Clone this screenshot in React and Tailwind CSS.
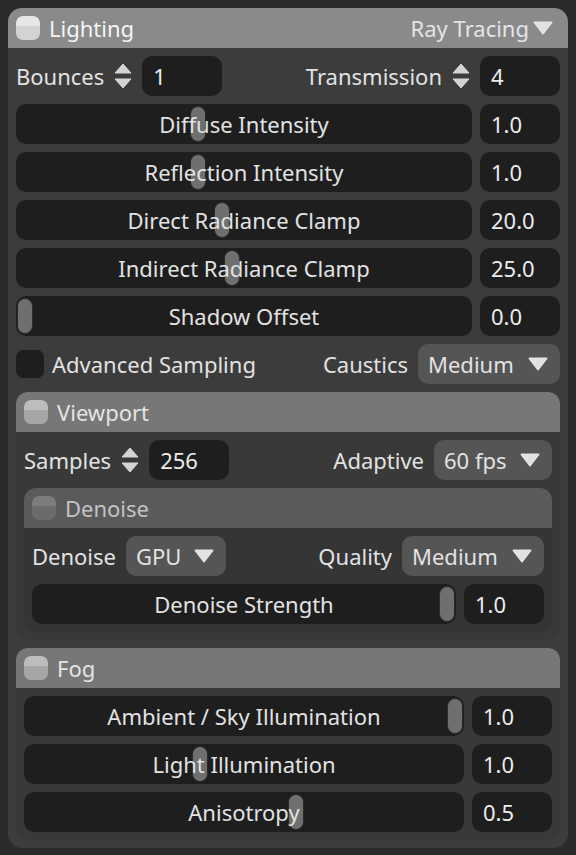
import React from 'react';

const tones = {
  lighting: {
    head: 'bg-[#8a8a8a] h-10',
    body: 'bg-[#3c3c3c]',
    top: 'bg-[#e6e6e6]',
    bottom: 'bg-[#d3d3d3]',
    title: 'text-[#f4f4f4]',
  },
  viewport: {
    head: 'bg-[#777777] h-10',
    body: 'bg-[#393939]',
    top: 'bg-[#bdbdbd]',
    bottom: 'bg-[#a6a6a6]',
    title: 'text-[#e4e4e4]',
  },
  denoise: {
    head: 'bg-[#5a5a5a] h-10',
    body: 'bg-[#353535]',
    top: 'bg-[#7c7c7c]',
    bottom: 'bg-[#6b6b6b]',
    title: 'text-[#c4c4c4]',
  },
};

function HeaderIcon({ tone }) {
  return (
    <div className="w-6 h-6 rounded-[7px] overflow-hidden flex flex-col shrink-0">
      <div className={`h-[10px] ${tone.top}`} />
      <div className={`flex-1 ${tone.bottom}`} />
    </div>
  );
}

function Triangle() {
  return (
    <svg width="20" height="14" viewBox="0 0 20 14" className="shrink-0">
      <path d="M1.5 1.5 H18.5 L10 12.5 Z" fill="#e2e2e2" stroke="#e2e2e2" strokeWidth="2" strokeLinejoin="round" />
    </svg>
  );
}

function Spinner() {
  return (
    <svg width="18" height="26" viewBox="0 0 18 26" className="shrink-0">
      <path d="M1 10 L9 1 L17 10 Z" fill="#d4d4d4" stroke="#d4d4d4" strokeWidth="1" strokeLinejoin="round" />
      <path d="M1 16 L17 16 L9 25 Z" fill="#d4d4d4" stroke="#d4d4d4" strokeWidth="1" strokeLinejoin="round" />
    </svg>
  );
}

function NumberBox({ value }) {
  return (
    <div className="w-20 h-10 rounded-[10px] bg-[#1e1e1e] flex items-center px-[11px] text-[#ececec]">
      {value}
    </div>
  );
}

function NumberField({ label, value }) {
  return (
    <div className="flex items-center gap-[10px]">
      <span>{label}</span>
      <Spinner />
      <NumberBox value={value} />
    </div>
  );
}

function Dropdown({ label, value, width }) {
  return (
    <div className="flex items-center gap-[10px]">
      <span>{label}</span>
      <div className={`${width} h-10 rounded-[10px] bg-[#555555] flex items-center justify-between pl-[10px] pr-3`}>
        <span>{value}</span>
        <Triangle />
      </div>
    </div>
  );
}

function Slider({ label, value, pos }) {
  return (
    <div className="flex gap-2 h-10">
      <div className="relative flex-1 rounded-[10px] bg-[#1e1e1e] flex items-center justify-center">
        <div
          className="absolute top-[2px] bottom-[2px] w-4 rounded-full bg-[#6f6f6f] border border-[#2a2a2a]"
          style={{ left: `calc(${pos} * (100% - 18px) + 1px)` }}
        />
        <span className="relative">{label}</span>
      </div>
      <NumberBox value={value} />
    </div>
  );
}

function Section({ tone, title, right, children, className = '' }) {
  return (
    <div className={`rounded-[12px] overflow-hidden ${tone.body} ${className}`}>
      <div className={`flex items-center justify-between pl-2 pr-[15px] ${tone.head}`}>
        <div className="flex items-center gap-[9px]">
          <HeaderIcon tone={tone} />
          <span className={tone.title}>{title}</span>
        </div>
        {right}
      </div>
      <div className="flex flex-col gap-2 p-2">{children}</div>
    </div>
  );
}

export default function App() {
  return (
    <div className="min-h-[855px] bg-[#2b2b2b] p-2 font-['Noto_Sans',sans-serif] text-[22px] leading-none text-[#e2e2e2]">
      <Section
        tone={tones.lighting}
        title="Lighting"
        className="rounded-[14px]"
        right={
          <div className="flex items-center gap-1 text-[#e4e4e4]">
            <span>Ray Tracing</span>
            <Triangle />
          </div>
        }
      >
        <div className="flex items-center justify-between">
          <NumberField label="Bounces" value="1" />
          <NumberField label="Transmission" value="4" />
        </div>
        <Slider label="Diffuse Intensity" value="1.0" pos={0.395} />
        <Slider label="Reflection Intensity" value="1.0" pos={0.395} />
        <Slider label="Direct Radiance Clamp" value="20.0" pos={0.45} />
        <Slider label="Indirect Radiance Clamp" value="25.0" pos={0.473} />
        <Slider label="Shadow Offset" value="0.0" pos={0} />
        <div className="flex items-center justify-between h-10">
          <div className="flex items-center gap-2">
            <div className="w-7 h-7 rounded-[7px] bg-[#1e1e1e]" />
            <span>Advanced Sampling</span>
          </div>
          <Dropdown label="Caustics" value="Medium" width="w-[142px]" />
        </div>

        <Section tone={tones.viewport} title="Viewport">
          <div className="flex items-center justify-between">
            <NumberField label="Samples" value="256" />
            <Dropdown label="Adaptive" value="60 fps" width="w-[118px]" />
          </div>
          <Section tone={tones.denoise} title="Denoise">
            <div className="flex items-center justify-between">
              <Dropdown label="Denoise" value="GPU" width="w-[100px]" />
              <Dropdown label="Quality" value="Medium" width="w-[142px]" />
            </div>
            <Slider label="Denoise Strength" value="1.0" pos={1} />
          </Section>
        </Section>

        <Section tone={tones.viewport} title="Fog">
          <Slider label="Ambient / Sky Illumination" value="1.0" pos={1} />
          <Slider label="Light Illumination" value="1.0" pos={0.396} />
          <Slider label="Anisotropy" value="0.5" pos={0.623} />
        </Section>
      </Section>
    </div>
  );
}
